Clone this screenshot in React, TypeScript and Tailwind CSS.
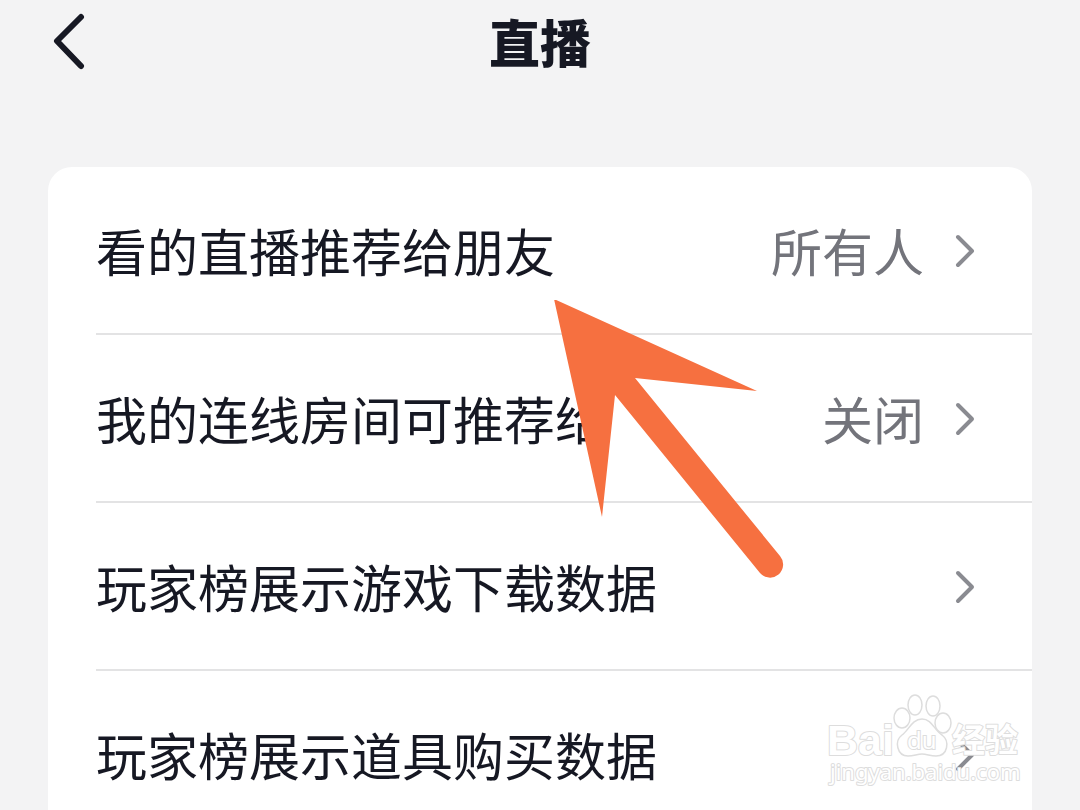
import React from 'react';

interface Setting {
    id: string;
    label: string;
    value?: string;
}

const settings: Setting[] = [
    { id: "recommend", label: "看的直播推荐给朋友", value: "所有人" },
    { id: "room", label: "我的连线房间可推荐给", value: "关闭" },
    { id: "download", label: "玩家榜展示游戏下载数据" },
    { id: "purchase", label: "玩家榜展示道具购买数据" },
];

const SettingRow: React.FC<{ setting: Setting }> = ({ setting }) => {
    return (
        <li className="border-b-2 border-[#e3e3e4] last:border-b-0">
            <button type="button" className="w-full h-[166px] pr-14 flex items-center justify-between text-left">
                <span className="whitespace-nowrap">{setting.label}</span>
                <span className="flex items-center gap-7 text-[#73747b]">
                    {setting.value && <span className="whitespace-nowrap">{setting.value}</span>}
                    <svg className="w-6 h-10" viewBox="0 0 24 40" fill="none" stroke="#8a8b91" strokeWidth="4" strokeLinecap="round" strokeLinejoin="round">
                        <path d="M6 7L20 21L6 35" />
                    </svg>
                </span>
            </button>
        </li>
    );
};

// 指向第一项的箭头
const Arrow: React.FC = () => {
    return (
        <svg className="absolute left-[506px] top-[133px] w-[230px] h-[280px] pointer-events-none" viewBox="0 0 230 280" fill="#f67040">
            <path d="M0 -1L203 91L81 78L226 256A13 13 0 0 1 206 273L61 95L48 217Z" />
        </svg>
    );
};

const Watermark: React.FC = () => {
    return (
        <svg
            className="absolute right-14 bottom-5 w-[200px] h-[96px] pointer-events-none"
            viewBox="0 0 200 96"
            fill="#ffffff"
            stroke="#dddddd"
            strokeWidth="1.5"
            fontFamily="'Liberation Sans', 'Noto Sans CJK SC', sans-serif"
        >
            <g strokeWidth="2" strokeLinejoin="round" paintOrder="stroke">
                <text x="3" y="61" fontSize="43" fontWeight="700">Bai</text>
                <text x="128" y="58" fontSize="33" fontWeight="700" fontFamily="'Noto Sans CJK SC', sans-serif">经验</text>
                <text x="6" y="86" fontSize="22" fontFamily="'Noto Sans', sans-serif">jingyan.baidu.com</text>
            </g>
            <path d="M98 25C88 25 85 36 78 41C70 47 73 62 84 62C90 62 93 60 98 60C103 60 106 62 112 62C124 62 126 47 118 41C110 36 108 25 98 25Z" />
            <ellipse cx="78" cy="24" rx="8" ry="10" />
            <ellipse cx="91" cy="11" rx="7" ry="10" />
            <ellipse cx="109" cy="12" rx="7" ry="10" />
            <ellipse cx="119" cy="29" rx="8" ry="10" />
            <text x="83" y="55" fontSize="24" fontFamily="'Noto Sans', sans-serif" strokeWidth="2" paintOrder="stroke">du</text>
        </svg>
    );
};

export default function App() {
    return (
        <div className="relative h-screen overflow-hidden bg-[#f3f3f4] text-[#161823] text-[51px] leading-none font-['Noto_Sans_CJK_SC',sans-serif]">
            <header className="h-[167px] px-12 pt-3 grid grid-cols-[48px_1fr_48px] items-start">
                <button type="button" aria-label="返回">
                    <svg className="w-12 h-[58px]" viewBox="0 0 48 58" fill="none" stroke="currentColor" strokeWidth="6" strokeLinecap="round" strokeLinejoin="round">
                        <path d="M33 5L9 29L33 54" />
                    </svg>
                </button>
                <h1 className="pt-1 text-center font-black">直播</h1>
            </header>
            <main className="relative mx-12 pl-12 rounded-t-3xl bg-white">
                <ul>
                    {settings.map((setting) => (
                        <SettingRow key={setting.id} setting={setting} />
                    ))}
                </ul>
                <Arrow />
            </main>
            <Watermark />
        </div>
    );
}
